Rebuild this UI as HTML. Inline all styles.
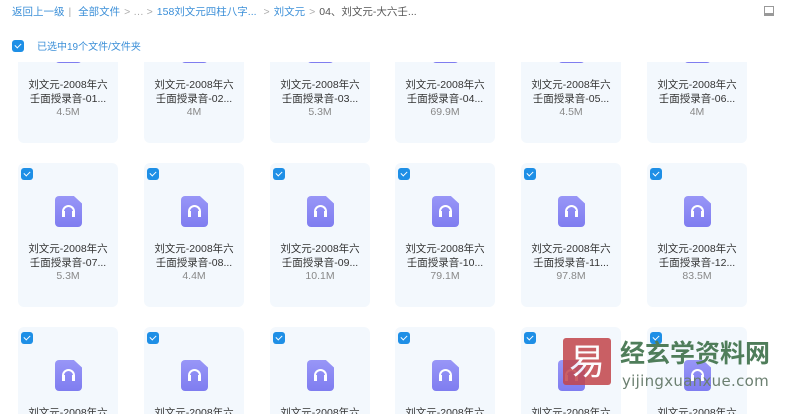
<!DOCTYPE html>
<html><head><meta charset="utf-8"><style>
*{margin:0;padding:0;box-sizing:border-box}
body{width:800px;height:414px;background:#fff;font-family:"Liberation Sans","Noto Sans CJK SC",sans-serif;overflow:hidden;position:relative}
.bc{position:absolute;top:4px;left:12px;font-size:10.5px;color:#3b8fd8;white-space:nowrap}
.bc span{margin-right:4px}
.g{color:#aaa}.d{color:#555}
.sel{position:absolute;top:38px;left:12px;font-size:10px;color:#3b8fd8;display:flex;align-items:center}
.cb{width:12px;height:12px;border-radius:3px;background:#1e8fe6;display:inline-block;position:relative}
.cb:after{content:"";position:absolute;left:3.5px;top:2.2px;width:3px;height:5px;border:solid #fff;border-width:0 1.4px 1.4px 0;transform:rotate(45deg)}
.list{position:absolute;top:62px;left:0;width:800px;height:352px;overflow:hidden}
.card{position:absolute;width:100px;height:144px;background:#f3f8fd;border-radius:6px}
.card .cb{position:absolute;left:3px;top:5px}
.ic{position:absolute;left:37px;top:33px;width:27px;height:31px;background:linear-gradient(#9896f7,#7f7df0);border-radius:4px;clip-path:polygon(0 0,70% 0,100% 24%,100% 100%,0 100%)}
.ic:after{content:"";position:absolute;left:7px;top:9px;width:9px;height:9px;border:2.4px solid #fff;border-bottom:none;border-radius:7px 7px 0 0}
.ic:before{content:"";position:absolute;left:7px;top:15px;width:13px;height:6px;border-left:3.5px solid #fff;border-right:3.5px solid #fff;box-sizing:border-box}
.t{position:absolute;top:80px;left:0;width:100px;text-align:center;font-size:10.5px;line-height:13.5px;color:#333}
.s{color:#888;display:block;margin-top:0}
.wm{position:absolute;left:563px;top:338px;width:48px;height:47px;background:#c2454a;border-radius:3px;opacity:.85;color:#fff;font-size:36px;text-align:center;line-height:47px}
.wt{position:absolute;left:620px;top:334px;font-size:25px;color:#4f7d5a;font-weight:bold;white-space:nowrap;font-family:"Noto Sans CJK SC",sans-serif;line-height:36px}
.wu{position:absolute;left:622px;top:372px;font-size:15px;color:#6b7f70;white-space:nowrap;font-family:"DejaVu Sans",sans-serif;letter-spacing:.3px}
</style></head><body>
<div class="bc"><span>返回上一级</span><span class="g">|</span> <span>全部文件</span><span class="g">&gt; … &gt;</span><span>158刘文元四柱八字...</span> <span class="g">&gt;</span><span>刘文元</span><span class="g">&gt;</span><span class="d">04、刘文元-大六壬...</span></div>
<div style="position:absolute;left:764px;top:6px;width:10px;height:10px;border:1px solid #999;border-width:1px 1px 3px"></div>
<div class="sel"><span class="cb"></span><span style="margin-left:13px">已选中19个文件/文件夹</span></div>
<div class="list" id="L"></div>
<script>
var sz=[["4.5M","4M","5.3M","69.9M","4.5M","4M"],["5.3M","4.4M","10.1M","79.1M","97.8M","83.5M"],["","","","","",""]];
var xs=[18,144,270,395,521,647],h="";
for(var r=0;r<3;r++)for(var c=0;c<6;c++){var n=r*6+c+1;var nn=(n<10?"0":"")+n;
h+='<div class="card" style="left:'+xs[c]+'px;top:'+(r*164-63)+'px">'+(r>0?'<span class="cb"></span>':'')+'<div class="ic"></div><div class="t">刘文元-2008年六<br>壬面授录音-'+nn+'...<span class="s">'+sz[r][c]+'</span></div></div>';}
document.getElementById("L").innerHTML=h;
</script>
<div class="wm">易</div>
<div class="wt">经玄学资料网</div>
<div class="wu">yijingxuanxue.com</div>
</body></html>
